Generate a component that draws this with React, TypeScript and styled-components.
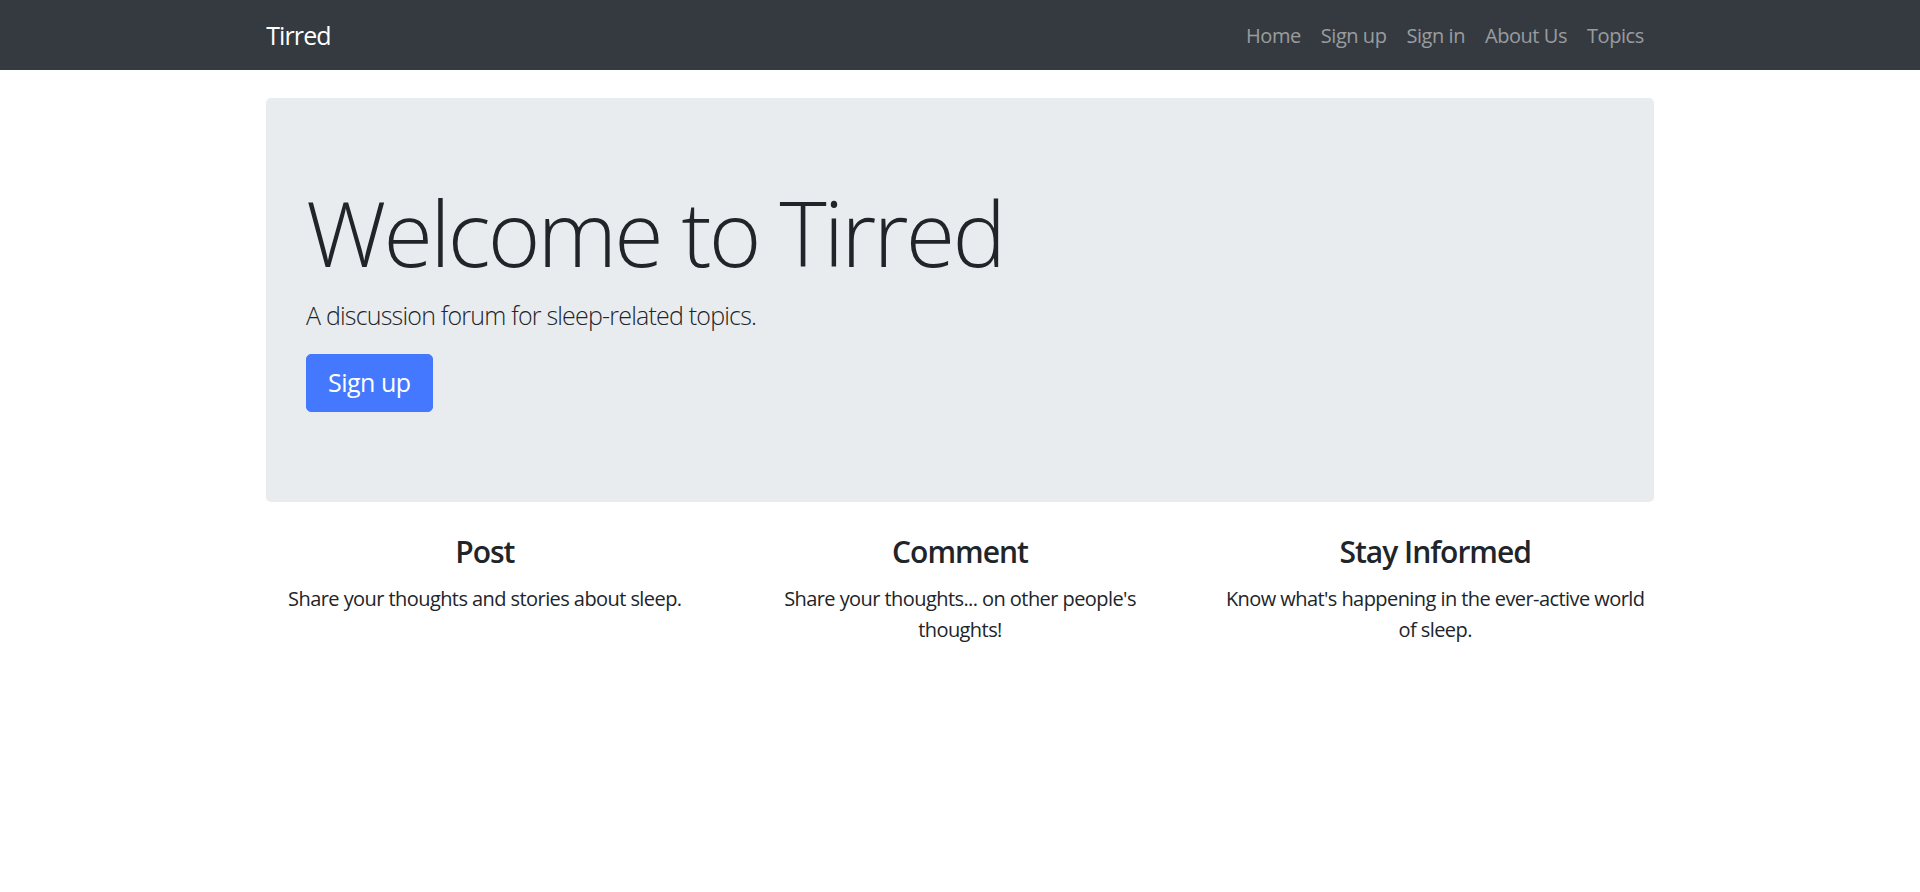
import React from "react";
import styled, { createGlobalStyle } from "styled-components";

const GlobalStyle = createGlobalStyle`
  *, *::before, *::after { box-sizing: border-box; }
  body {
    margin: 0;
    font-family: "Open Sans", "Noto Sans", sans-serif;
    font-size: 20px;
    line-height: 1.5;
    color: #212529;
    background: #ffffff;
  }
`;

const Navbar = styled.nav`
  background: #343a40;
  height: 70px;
`;

const NavInner = styled.div`
  width: 1425px;
  margin: 0 auto;
  padding: 2px 18.75px 0;
  height: 100%;
  display: flex;
  align-items: center;
  justify-content: space-between;
`;

const Brand = styled.a`
  font-size: 25px;
  line-height: 1.5;
  letter-spacing: -0.9px;
  color: #ffffff;
  text-decoration: none;
`;

const NavList = styled.ul`
  list-style: none;
  margin: 0;
  padding: 0;
  display: flex;
`;

const NavLink = styled.a`
  display: block;
  padding: 0 10px;
  font-size: 20px;
  line-height: 1.5;
  letter-spacing: -0.45px;
  color: rgba(255, 255, 255, 0.5);
  text-decoration: none;
`;

const Container = styled.main`
  width: 1425px;
  margin: 0 auto;
  padding: 0 18.5px;
`;

const Jumbotron = styled.section`
  margin-top: 28px;
  margin-bottom: 32px;
  background: #e9ecef;
  border-radius: 5px;
  padding: 80px 40px 90px;
`;

const Title = styled.h1`
  margin: 0 0 11px;
  font-size: 90px;
  font-weight: 300;
  line-height: 1.2;
  letter-spacing: -2.8px;
  color: #212529;
`;

const Lead = styled.p`
  margin: 0 0 19px;
  font-size: 25px;
  font-weight: 300;
  line-height: 1.5;
  letter-spacing: -0.8px;
`;

const PrimaryButton = styled.a`
  display: inline-block;
  padding: 9.5px 21px;
  font-size: 25px;
  line-height: 1.5;
  letter-spacing: -0.5px;
  color: #ffffff;
  background: #4479ff;
  border: 1px solid #4479ff;
  border-radius: 5px;
  text-decoration: none;
`;

const Features = styled.div`
  display: grid;
  grid-template-columns: repeat(3, 1fr);
  margin: 0 -18.75px;
`;

const Feature = styled.div`
  padding: 0 18.75px;
  text-align: center;
`;

const FeatureTitle = styled.h4`
  margin: 0 0 13px;
  font-size: 30px;
  font-weight: 600;
  line-height: 1.2;
  letter-spacing: -1px;
`;

const FeatureText = styled.p`
  margin: 0;
  font-size: 20px;
  line-height: 31px;
  letter-spacing: -0.57px;
`;

const features = [
  { title: "Post", text: "Share your thoughts and stories about sleep." },
  { title: "Comment", text: "Share your thoughts... on other people's thoughts!" },
  { title: "Stay Informed", text: "Know what's happening in the ever-active world of sleep." },
];

const links = ["Home", "Sign up", "Sign in", "About Us", "Topics"];

export default function App() {
  return (
    <>
      <GlobalStyle />
      <Navbar>
        <NavInner>
          <Brand href="#">Tirred</Brand>
          <NavList>
            {links.map((l) => (
              <li key={l}>
                <NavLink href="#">{l}</NavLink>
              </li>
            ))}
          </NavList>
        </NavInner>
      </Navbar>
      <Container>
        <Jumbotron>
          <Title>Welcome to Tirred</Title>
          <Lead>A discussion forum for sleep-related topics.</Lead>
          <PrimaryButton href="#">Sign up</PrimaryButton>
        </Jumbotron>
        <Features>
          {features.map((f) => (
            <Feature key={f.title}>
              <FeatureTitle>{f.title}</FeatureTitle>
              <FeatureText>{f.text}</FeatureText>
            </Feature>
          ))}
        </Features>
      </Container>
    </>
  );
}
